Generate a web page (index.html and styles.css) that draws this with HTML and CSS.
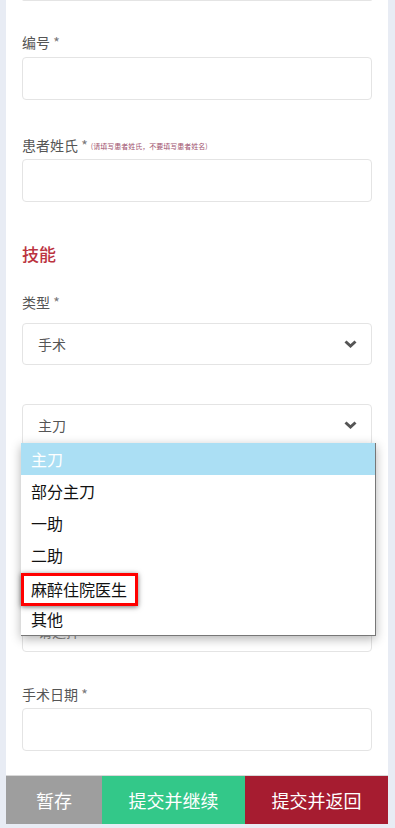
FILE: index.html
```html
<!DOCTYPE html>
<html lang="zh-CN">
<head>
<meta charset="utf-8">
<title>技能登记</title>
<link rel="stylesheet" href="styles.css">
</head>
<body>
<div class="page">
  <div class="card">
    <div class="input-tail"></div>

    <div class="field f-code">
      <label class="label">编号 <span class="req">*</span></label>
      <div class="input"></div>
    </div>

    <div class="field f-name">
      <label class="label">患者姓氏 <span class="req">*</span> <span class="note">(请填写患者姓氏，不要填写患者姓名)</span></label>
      <div class="input"></div>
    </div>

    <h2 class="section">技能</h2>

    <div class="field f-type">
      <label class="label">类型 <span class="req">*</span></label>
      <div class="select"><span class="sel-text">手术</span>
        <svg class="chev" width="13" height="8" viewBox="0 0 13 8"><polyline points="1.5,1.5 6.5,6 11.5,1.5" fill="none" stroke="#555" stroke-width="3"/></svg>
      </div>
    </div>

    <div class="field f-role">
      <div class="select"><span class="sel-text">主刀</span>
        <svg class="chev" width="13" height="8" viewBox="0 0 13 8"><polyline points="1.5,1.5 6.5,6 11.5,1.5" fill="none" stroke="#555" stroke-width="3"/></svg>
      </div>
      <ul class="dropdown">
        <li class="opt active">主刀</li>
        <li class="opt">部分主刀</li>
        <li class="opt">一助</li>
        <li class="opt">二助</li>
        <li class="opt marked"><span class="mark">麻醉住院医生</span></li>
        <li class="opt">其他</li>
      </ul>
    </div>

    <div class="field f-level">
      <div class="select"><span class="sel-text">请选择</span>
        <svg class="chev" width="13" height="8" viewBox="0 0 13 8"><polyline points="1.5,1.5 6.5,6 11.5,1.5" fill="none" stroke="#555" stroke-width="3"/></svg>
      </div>
    </div>

    <div class="field f-date">
      <label class="label">手术日期 <span class="req">*</span></label>
      <div class="input"></div>
    </div>
  </div>

  <div class="footer">
    <button class="btn btn-save">暂存</button>
    <button class="btn btn-next">提交并继续</button>
    <button class="btn btn-back">提交并返回</button>
  </div>
</div>
</body>
</html>
```

FILE: styles.css
```css
* { box-sizing: border-box; }
html, body {
  margin: 0;
  padding: 0;
  background: #e8ecf4;
  font-family: "Noto Sans CJK SC", "Noto Sans", "Liberation Sans", sans-serif;
}
.page {
  height: 828px;
  display: flex;
  flex-direction: column;
  padding: 0 7px 4px 6px;
}
.card {
  flex: 1;
  background: #fff;
  overflow: hidden;
  padding: 0 16px;
}
.input-tail {
  height: 2px;
  margin-top: -1px;
  border: 1px solid #e4e4e4;
  border-top: none;
  border-radius: 0 0 4px 4px;
}
.field { position: relative; }
.label {
  display: block;
  font-size: 14px;
  line-height: 20px;
  color: #555;
}
.req { color: #777; }
.note {
  font-size: 7px;
  color: #a0526e;
  vertical-align: 2px;
}
.input, .select {
  height: 43px;
  border: 1px solid #e4e4e4;
  border-radius: 4px;
  background: #fff;
}
.select {
  height: 42px;
  display: flex;
  align-items: center;
  justify-content: space-between;
  padding: 0 14px 0 15px;
}
.sel-text { font-size: 14px; color: #555; }
.chev { display: block; }

.f-code { margin-top: 31px; }
.f-code .label { margin-bottom: 5px; }
.f-name { margin-top: 35px; }
.f-name .label { margin-bottom: 3px; }
.section {
  margin: 40px 0 0;
  font-size: 17px;
  line-height: 24px;
  font-weight: 500;
  color: #bb3340;
}
.f-type { margin-top: 26px; }
.f-type .label { margin-bottom: 11px; }
.f-role { margin-top: 39px; z-index: 2; }
.f-level { margin-top: 164px; }
.f-level .sel-text { color: #888; }
.f-date { margin-top: 32px; }
.f-date .label { margin-bottom: 4px; }

.dropdown {
  position: absolute;
  top: 39px;
  left: -1px;
  width: 355px;
  margin: 0;
  padding: 0;
  list-style: none;
  background: #fff;
  border-right: 1px solid #777;
  border-bottom: 1px solid #777;
  box-shadow: 0 3px 10px rgba(0,0,0,0.3);
}
.opt {
  height: 32px;
  line-height: 32px;
  padding: 0 10px;
  font-size: 16px;
  color: #111;
}
.opt.active { background: #abdff4; color: #fff; }
.opt.marked { padding: 0; position: relative; }
.mark {
  display: inline-block;
  margin-top: 2px;
  height: 33px;
  line-height: 27px;
  padding: 0 8px 0 7px;
  border: 3px solid #f00;
  box-shadow: 0 1px 5px rgba(0,0,0,0.55);
}

.footer {
  display: flex;
  height: 49px;
  border-top: 1px solid #d8d8d8;
}
.btn {
  border: none;
  margin: 0;
  padding: 0;
  color: #fff;
  font-family: "Noto Sans CJK SC", "Noto Sans", sans-serif;
  font-size: 18px;
}
.btn-save { width: 96px; background: #9e9e9e; }
.btn-next { width: 143px; background: #33c889; }
.btn-back { flex: 1; background: #a61c30; }
```
